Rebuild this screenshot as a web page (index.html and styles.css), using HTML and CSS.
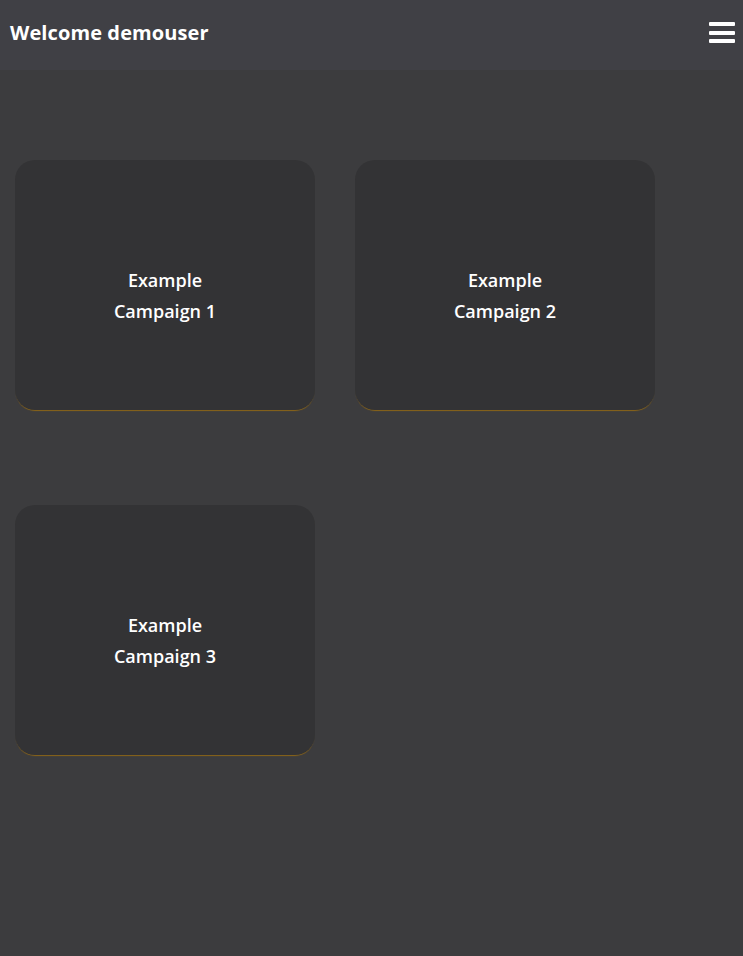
FILE: index.html
```html
<!DOCTYPE html>
<html>
<head>
<meta charset="utf-8">
<link rel="stylesheet" href="styles.css">
</head>
<body>
<header class="topbar">
  <h1 class="welcome">Welcome demouser</h1>
  <button class="menu" aria-label="Menu">
    <span class="bar"></span><span class="bar"></span><span class="bar"></span>
  </button>
</header>
<main class="grid">
  <div class="card"><span class="label">Example<br>Campaign 1</span></div>
  <div class="card"><span class="label">Example<br>Campaign 2</span></div>
  <div class="card"><span class="label">Example<br>Campaign 3</span></div>
</main>
</body>
</html>
```
FILE: styles.css
```css
html, body {
  margin: 0;
  padding: 0;
  background: #3c3c3e;
  font-family: "Open Sans", "Liberation Sans", sans-serif;
  color: #fff;
}
body { min-height: 956px; }
.topbar {
  height: 70px;
  background: #404045;
  display: flex;
  align-items: center;
  justify-content: space-between;
  padding: 0 8px 0 10px;
  box-sizing: border-box;
}
.welcome {
  margin: 0;
  font-size: 20px;
  font-weight: 700;
  letter-spacing: 0.1px;
  padding-bottom: 6px;
}
.menu {
  background: none;
  border: 0;
  padding: 0;
  width: 26px;
  display: flex;
  flex-direction: column;
  gap: 4.5px;
  margin-bottom: 5px;
}
.bar {
  display: block;
  height: 4px;
  width: 26px;
  background: #fff;
  border-radius: 1px;
}
.grid {
  display: grid;
  grid-template-columns: 300px 300px;
  column-gap: 40px;
  row-gap: 95px;
  padding: 90px 15px 0;
}
.card {
  height: 250px;
  box-sizing: border-box;
  padding-top: 21px;
  background: #333335;
  border-radius: 20px;
  box-shadow: 0 2px 1px -1px #8a6418;
  display: flex;
  align-items: center;
  justify-content: center;
  text-align: center;
  font-size: 18px;
  font-weight: 600;
  line-height: 31px;
}
```
